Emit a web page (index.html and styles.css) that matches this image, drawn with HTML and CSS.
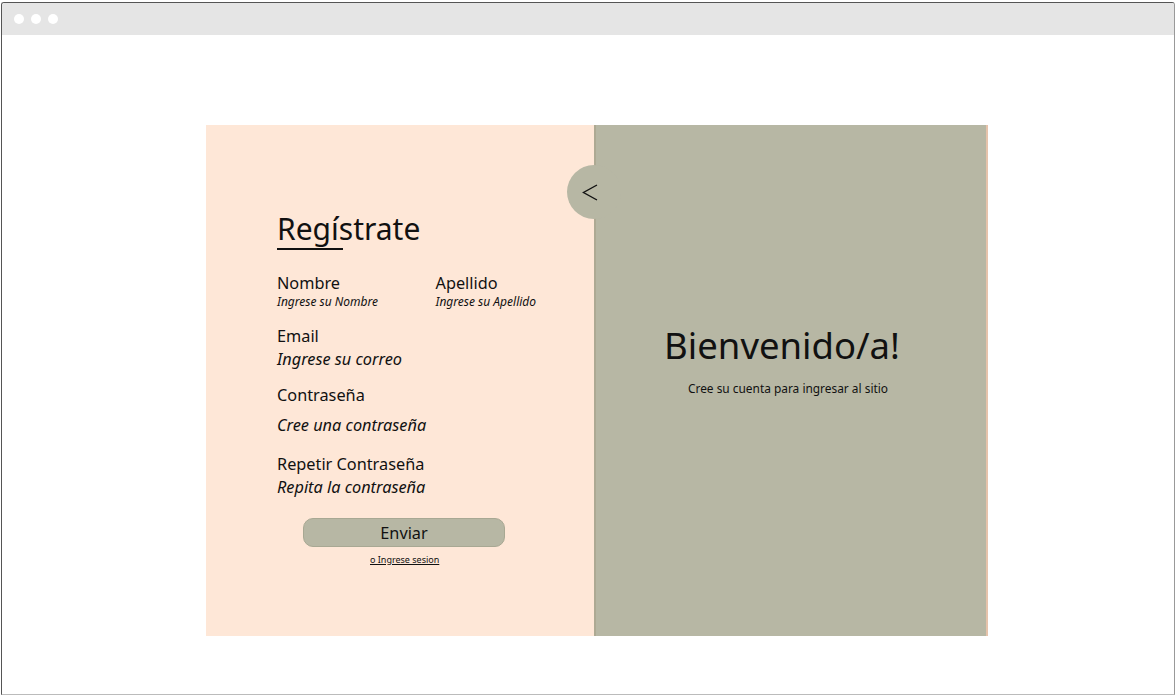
FILE: index.html
```html
<!DOCTYPE html>
<html lang="es">
<head>
<meta charset="utf-8">
<link rel="stylesheet" href="styles.css">
</head>
<body>
<div class="window">
  <div class="titlebar">
    <span class="dot"></span><span class="dot"></span><span class="dot"></span>
  </div>
  <div class="viewport">
    <div class="card">
      <div class="left">
        <div class="tab">
          <svg class="chev" width="20" height="20" viewBox="0 0 20 20"><polyline points="16,3 2.5,10.5 16,18" fill="none" stroke="#111" stroke-width="1.4"/></svg>
        </div>
        <h1 class="title">Regístrate</h1>
        <div class="row">
          <div class="field half">
            <div class="label">Nombre</div>
            <div class="ph small">Ingrese su Nombre</div>
          </div>
          <div class="field half">
            <div class="label">Apellido</div>
            <div class="ph small">Ingrese su Apellido</div>
          </div>
        </div>
        <div class="field email">
          <div class="label">Email</div>
          <div class="ph">Ingrese su correo</div>
        </div>
        <div class="field pass">
          <div class="label">Contraseña</div>
          <div class="ph">Cree una contraseña</div>
        </div>
        <div class="field repeat">
          <div class="label">Repetir Contraseña</div>
          <div class="ph">Repita la contraseña</div>
        </div>
        <button class="btn">Enviar</button>
        <a class="login" href="#">o Ingrese sesion</a>
      </div>
      <div class="right">
        <h2 class="welcome">Bienvenido/a!</h2>
        <p class="sub">Cree su cuenta para ingresar al sitio</p>
      </div>
    </div>
  </div>
</div>
</body>
</html>
```
FILE: styles.css
```css
* { box-sizing: border-box; }
html, body { margin: 0; padding: 0; background: #fff; }
body { font-family: "Noto Sans", "DejaVu Sans", sans-serif; color: #111; }

.window {
  margin: 2px 1px 0 1px;
  width: 1174px;
  height: 693px;
  border: 1px solid #555;
  border-bottom-color: #bbb;
  border-right-color: #999;
  border-radius: 3px 3px 0 0;
  overflow: hidden;
  background: #fff;
}
.titlebar {
  height: 32px;
  background: #e5e5e5;
  display: flex;
  align-items: center;
  gap: 7px;
  padding-left: 12px;
}
.dot { width: 10px; height: 10px; border-radius: 50%; background: #fff; }

.viewport { padding-top: 90px; padding-left: 204px; }

.card {
  width: 782px;
  height: 511px;
  display: flex;
  background: #e6c3ab;
}
.left {
  position: relative;
  width: 388px;
  background: #fee7d7;
  padding: 86px 0 0 71px;
  display: flex;
  flex-direction: column;
}
.right {
  width: 392px;
  background: #b7b7a4;
  border-left: 2px solid #ada993;
  display: flex;
  flex-direction: column;
  align-items: center;
  padding-top: 198px;
}
.tab {
  position: absolute;
  right: -27px;
  top: 40px;
  width: 54px;
  height: 54px;
  border-radius: 50%;
  background: #b7b7a4;
  z-index: 2;
}
.chev {
  position: absolute;
  left: 14px;
  top: 17px;
}
.title {
  margin: 0;
  font-size: 30px;
  font-weight: 400;
  line-height: 36px;
  align-self: flex-start;
  position: relative;
}
.title::after {
  content: "";
  position: absolute;
  left: 0;
  bottom: -3px;
  width: 66px;
  height: 2px;
  background: #111;
}
.row { display: flex; margin-top: 25px; }
.half { width: 159px; }
.label { font-size: 16.3px; line-height: 22px; }
.ph { font-style: italic; font-size: 16.3px; line-height: 22px; }
.ph.small { font-size: 12px; line-height: 16px; margin-top: 0; }
.email { margin-top: 15px; }
.email .ph { margin-top: 1px; }
.pass { margin-top: 14px; }
.pass .ph { margin-top: 8px; }
.repeat { margin-top: 17px; }
.repeat .ph { margin-top: 1px; }
.btn {
  margin: 20px 0 0 26px;
  width: 202px;
  height: 29px;
  border-radius: 10px;
  border: 1px solid #a8a893;
  background: #b7b7a4;
  font-family: inherit;
  font-size: 16.3px;
  color: #111;
  padding: 0;
}
.login {
  margin: 6px 0 0 93px;
  font-size: 9px;
  color: #111;
  text-decoration: underline;
  align-self: flex-start;
}
.welcome {
  margin: 0;
  padding-right: 18px;
  font-size: 36.5px;
  font-weight: 400;
  line-height: 44px;
}
.sub {
  margin: 13px 0 0 0;
  padding-right: 6px;
  font-size: 11.9px;
  line-height: 16px;
}
```
